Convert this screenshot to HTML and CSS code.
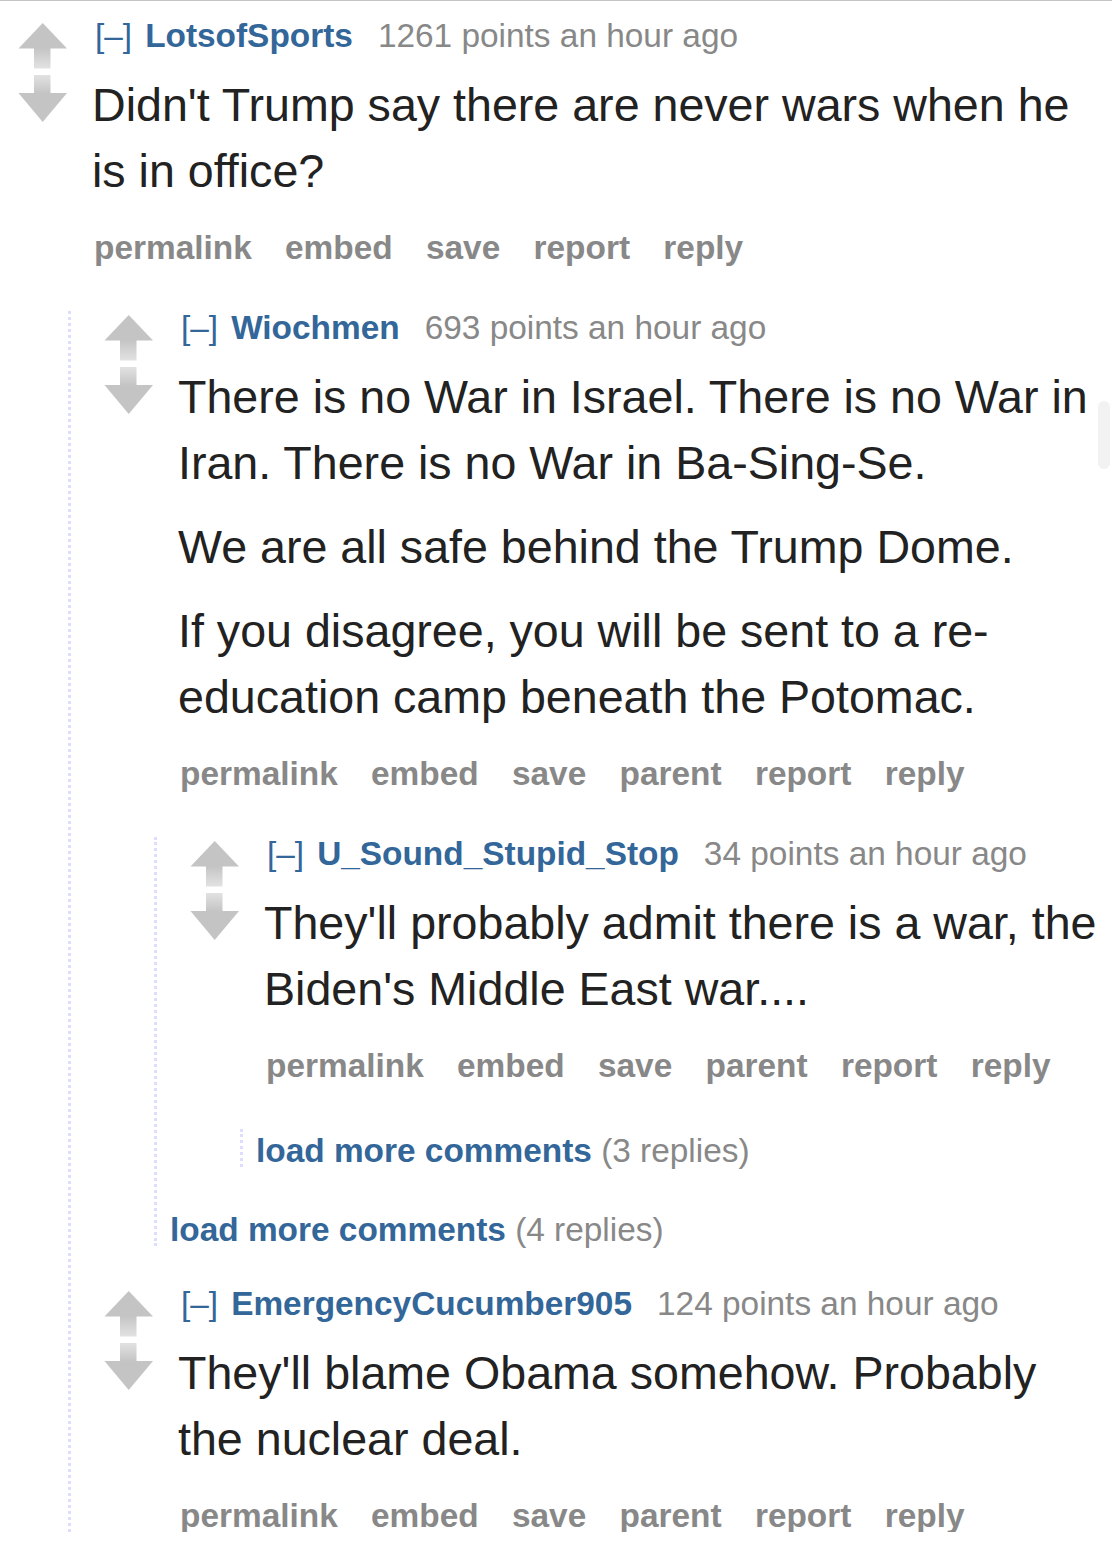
FILE: index.html
```html
<!DOCTYPE html>
<html>

<head>
    <title>comments</title>
    <link rel="stylesheet" href="styles.css">
</head>

<body>
    <svg class="defs" width="0" height="0">
        <defs>
            <linearGradient id="stemUp" x1="0" y1="0" x2="0" y2="1">
                <stop offset="0" stop-color="#c4c4c4" />
                <stop offset="1" stop-color="#e2e2e2" />
            </linearGradient>
            <linearGradient id="stemDown" x1="0" y1="0" x2="0" y2="1">
                <stop offset="0" stop-color="#e2e2e2" />
                <stop offset="1" stop-color="#c4c4c4" />
            </linearGradient>
            <symbol id="arrows" viewBox="0 0 50 100">
                <polygon points="24.7,1 49,26.5 0.5,26.5" fill="#c4c4c4" />
                <rect x="16" y="26" width="16.5" height="20.5" fill="url(#stemUp)" />
                <rect x="16" y="53" width="16.5" height="18.5" fill="url(#stemDown)" />
                <polygon points="0.5,71 49,71 24.7,100" fill="#c4c4c4" />
            </symbol>
        </defs>
    </svg>

    <div class="thread">
        <div class="comment">
            <div class="row">
                <div class="midcol"><svg class="arrows"><use href="#arrows" /></svg></div>
                <div class="entry">
                    <p class="tagline"><span class="expand">[–]</span><span class="author">LotsofSports</span><span class="score">1261 points an hour ago</span></p>
                    <div class="md">
                        <p>Didn't Trump say there are never wars when he is in office?</p>
                    </div>
                    <ul class="buttons">
                        <li>permalink</li>
                        <li>embed</li>
                        <li>save</li>
                        <li>report</li>
                        <li>reply</li>
                    </ul>
                </div>
            </div>
            <div class="child">
                <div class="comment">
                    <div class="row">
                        <div class="midcol"><svg class="arrows"><use href="#arrows" /></svg></div>
                        <div class="entry">
                            <p class="tagline"><span class="expand">[–]</span><span class="author">Wiochmen</span><span class="score">693 points an hour ago</span></p>
                            <div class="md">
                                <p>There is no War in Israel. There is no War in Iran. There is no War in Ba-Sing-Se.</p>
                                <p>We are all safe behind the Trump Dome.</p>
                                <p>If you disagree, you will be sent to a re-education camp beneath the Potomac.</p>
                            </div>
                            <ul class="buttons">
                                <li>permalink</li>
                                <li>embed</li>
                                <li>save</li>
                                <li>parent</li>
                                <li>report</li>
                                <li>reply</li>
                            </ul>
                        </div>
                    </div>
                    <div class="child">
                        <div class="comment">
                            <div class="row">
                                <div class="midcol"><svg class="arrows"><use href="#arrows" /></svg></div>
                                <div class="entry">
                                    <p class="tagline"><span class="expand">[–]</span><span class="author">U_Sound_Stupid_Stop</span><span class="score">34 points an hour ago</span></p>
                                    <div class="md">
                                        <p>They'll probably admit there is a war, the Biden's Middle East war....</p>
                                    </div>
                                    <ul class="buttons">
                                        <li>permalink</li>
                                        <li>embed</li>
                                        <li>save</li>
                                        <li>parent</li>
                                        <li>report</li>
                                        <li>reply</li>
                                    </ul>
                                </div>
                            </div>
                            <div class="child">
                                <p class="more"><span class="moreLink">load more comments</span> (3 replies)</p>
                            </div>
                        </div>
                        <p class="more"><span class="moreLink">load more comments</span> (4 replies)</p>
                    </div>
                </div>
                <div class="comment">
                    <div class="row">
                        <div class="midcol"><svg class="arrows"><use href="#arrows" /></svg></div>
                        <div class="entry">
                            <p class="tagline"><span class="expand">[–]</span><span class="author">EmergencyCucumber905</span><span class="score">124 points an hour ago</span></p>
                            <div class="md">
                                <p>They'll blame Obama somehow. Probably the nuclear deal.</p>
                            </div>
                            <ul class="buttons">
                                <li>permalink</li>
                                <li>embed</li>
                                <li>save</li>
                                <li>parent</li>
                                <li>report</li>
                                <li>reply</li>
                            </ul>
                        </div>
                    </div>
                </div>
            </div>
        </div>
    </div>

    <div class="scrollThumb"></div>
</body>

</html>
```

FILE: styles.css
```css
html,
body {
    margin: 0;
    padding: 0;
    background-color: white;
    overflow: hidden;
}

body {
    font-family: 'Liberation Sans', Arial, sans-serif;
    color: #222;
}

.defs {
    position: absolute;
    width: 0;
    height: 0;
}

.thread {
    border-top: 1px solid #c4c4c4;
    padding: 18px 4px 0 18px;
}

.row {
    display: flex;
    gap: 24px;
}

.midcol {
    flex: 0 0 50px;
    padding-top: 3px;
}

.arrows {
    display: block;
    width: 50px;
    height: 100px;
}

.entry {
    flex: 1;
    min-width: 0;
}

.tagline {
    margin: 0;
    padding-left: 3px;
    font-size: 33.4px;
    line-height: 33px;
    white-space: nowrap;
}

.expand {
    color: #369;
    margin-right: 13px;
}

.author {
    color: #369;
    font-weight: bold;
    margin-right: 25px;
}

.score {
    color: #888;
}

.md {
    margin-top: 20px;
}

.md p {
    margin: 0;
    font-size: 46.6px;
    line-height: 66px;
}

.md p + p {
    margin-top: 18px;
}

.buttons {
    display: flex;
    gap: 33.3px;
    list-style: none;
    margin: 27px 0 0 0;
    padding: 0 0 0 2px;
    font-size: 33.4px;
    line-height: 33px;
    font-weight: bold;
    color: #888;
}

.child {
    margin-top: 47px;
    margin-left: 50px;
    border-left: 3px dotted #ddf;
    padding-left: 13px;
}

.child > .comment {
    margin-left: 20px;
}

.comment + .comment,
.comment + .more {
    margin-top: 41px;
}

.more {
    margin: 0;
    padding-top: 5px;
    font-size: 33.4px;
    line-height: 33px;
    color: #888;
}

.moreLink {
    color: #369;
    font-weight: bold;
}

.scrollThumb {
    position: fixed;
    top: 401px;
    right: 2px;
    width: 12px;
    height: 68px;
    border-radius: 6px;
    background-color: #f2f2f2;
}
```
